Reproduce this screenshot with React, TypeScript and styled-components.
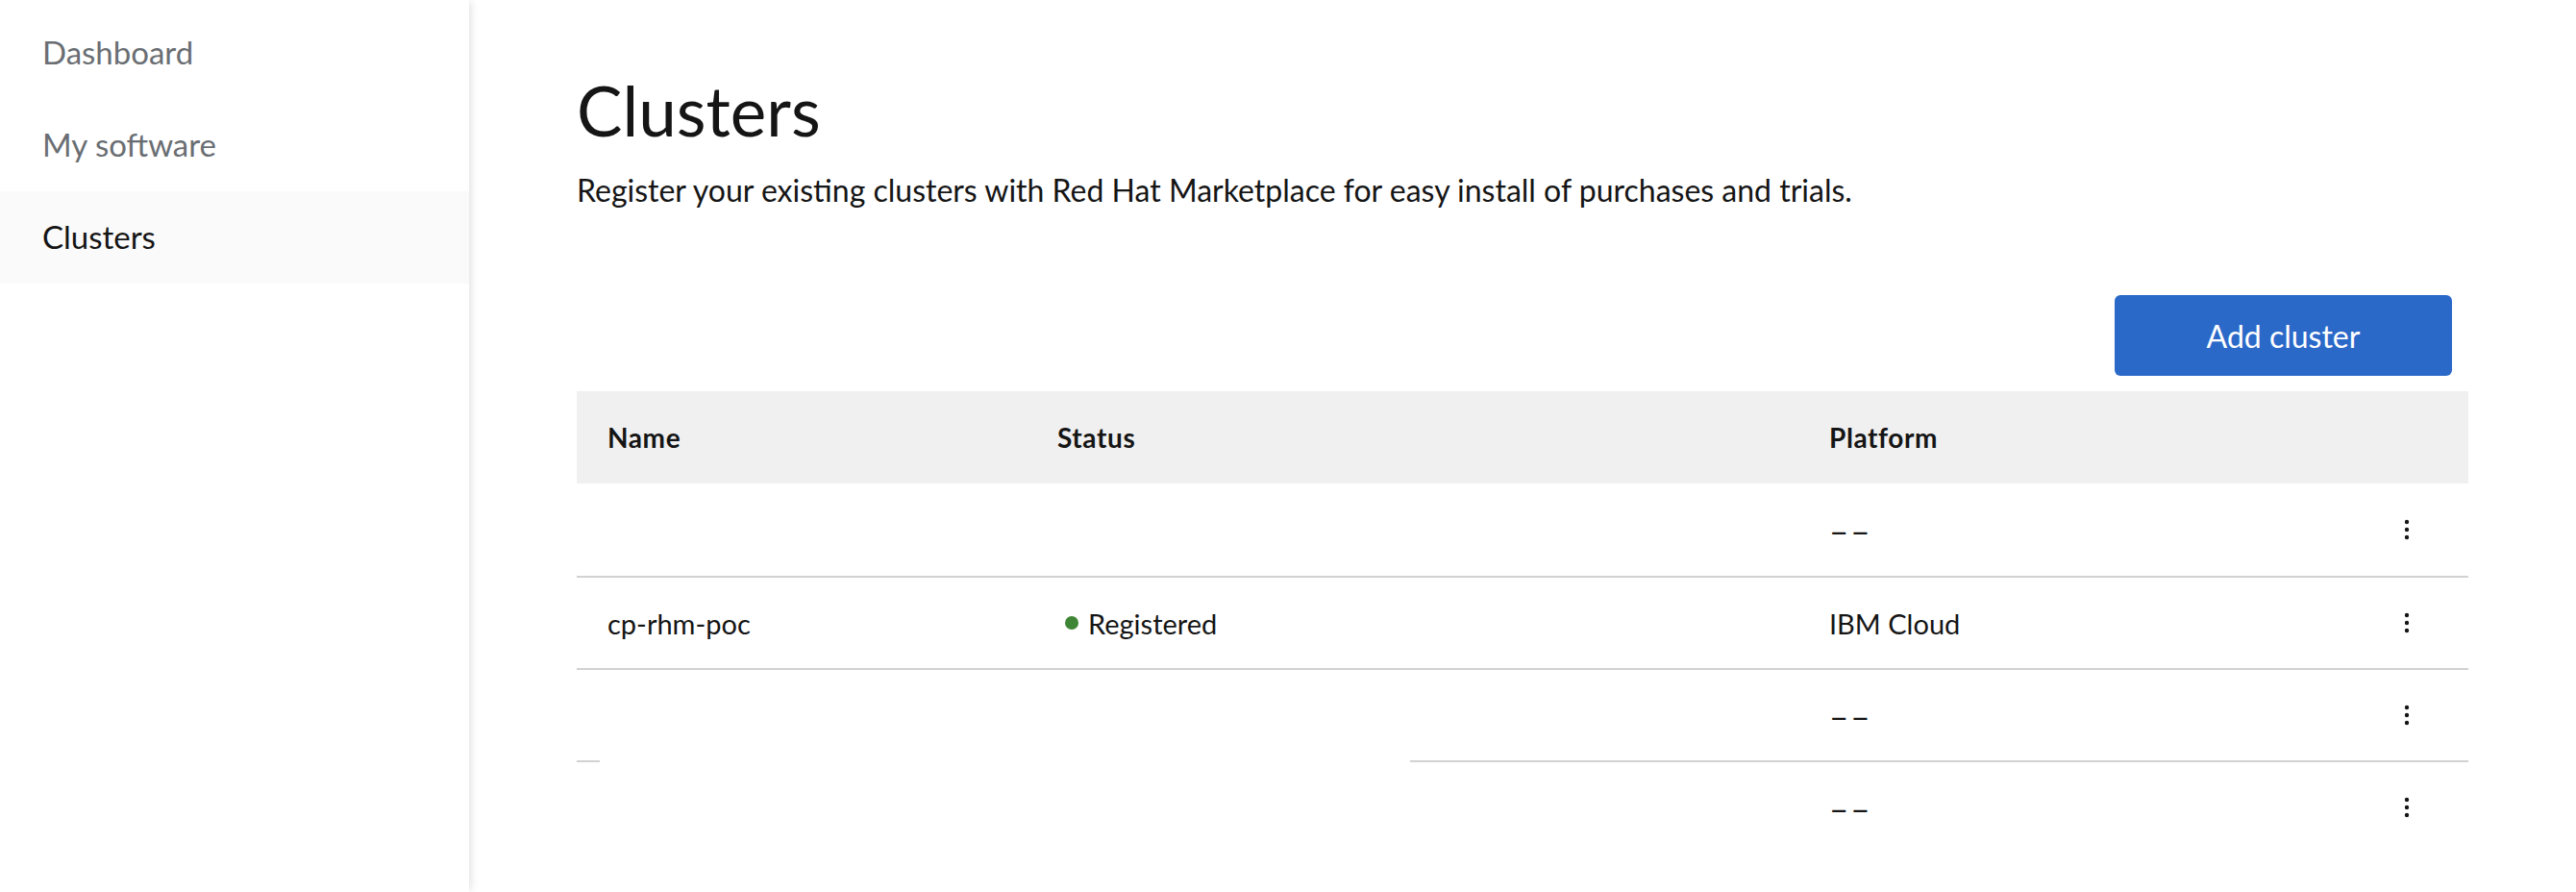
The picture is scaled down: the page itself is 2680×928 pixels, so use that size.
import React from "react";
import styled, { createGlobalStyle } from "styled-components";

const GlobalStyle = createGlobalStyle`
  html, body {
    margin: 0;
    padding: 0;
    background: #ffffff;
  }
  body {
    font-family: "Lato", "Noto Sans", sans-serif;
    color: #151515;
  }
  * { box-sizing: border-box; }
`;

const Page = styled.div`
  display: flex;
  min-height: 928px;
  background: #ffffff;
`;

const Sidebar = styled.nav`
  width: 488px;
  flex: 0 0 488px;
  padding-top: 7px;
  background: #ffffff;
  box-shadow: 4px 0 8px -2px rgba(3, 3, 3, 0.12);
  position: relative;
  z-index: 1;
`;

const NavItem = styled.a<{ $active?: boolean }>`
  display: flex;
  align-items: center;
  height: 96px;
  padding-left: 44px;
  padding-bottom: 2px;
  font-size: 33px;
  color: ${(p) => (p.$active ? "#151515" : "#6a6e73")};
  background: ${(p) => (p.$active ? "#fafafa" : "transparent")};
  text-decoration: none;
  cursor: pointer;
`;

const Main = styled.main`
  flex: 1;
  padding: 73px 112px 0 112px;
`;

const Title = styled.h1`
  margin: 0;
  font-size: 71px;
  line-height: 84px;
  font-weight: 400;
  color: #151515;
`;

const Subtitle = styled.p`
  margin: 22px 0 0 0;
  font-size: 32px;
  line-height: 38px;
  color: #151515;
`;

const Toolbar = styled.div`
  display: flex;
  justify-content: flex-end;
  padding-right: 17px;
  margin-top: 90px;
  margin-bottom: 16px;
`;

const PrimaryButton = styled.button`
  width: 351px;
  height: 84px;
  border: none;
  border-radius: 6px;
  background: #2b69c9;
  color: #ffffff;
  font-family: inherit;
  font-size: 32px;
  cursor: pointer;
`;

const Table = styled.div`
  display: flex;
  flex-direction: column;
`;

const columns = "468px 803px 1fr 128px";

const HeaderRow = styled.div`
  display: grid;
  grid-template-columns: ${columns};
  height: 96px;
  background: #f0f0f0;
  align-items: center;
`;

const HeaderCell = styled.div`
  padding-left: 32px;
  font-size: 28px;
  letter-spacing: 0.6px;
  font-weight: 700;
  color: #151515;
`;

const Row = styled.div<{ $divider?: "none" | "full" | "broken" }>`
  display: grid;
  grid-template-columns: ${columns};
  height: 96px;
  align-items: center;
  border-top: ${(p) => (p.$divider === "full" ? "2px solid #d2d2d2" : "none")};
  padding-top: ${(p) => (p.$divider === "broken" ? "2px" : "0")};
  background: ${(p) =>
    p.$divider === "broken"
      ? "linear-gradient(to right, #d2d2d2 24px, transparent 24px, transparent 867px, #d2d2d2 867px) top / 100% 2px no-repeat"
      : "transparent"};
`;

const Cell = styled.div`
  padding-left: 32px;
  font-size: 29px;
  color: #151515;
  display: flex;
  align-items: center;
`;

const StatusDot = styled.span`
  width: 14px;
  height: 14px;
  border-radius: 50%;
  background: #3e8635;
  margin-left: 8px;
  margin-right: 10px;
  flex: 0 0 14px;
`;

const Dash = styled.span`
  font-size: 35px;
  letter-spacing: 2px;
`;

const KebabCell = styled.div`
  display: flex;
  justify-content: center;
  align-items: center;
`;

const KebabButton = styled.button`
  background: transparent;
  border: none;
  padding: 0;
  display: flex;
  cursor: pointer;
`;

const Kebab = () => (
  <KebabButton aria-label="Actions">
    <svg width="6" height="22" viewBox="0 0 6 22">
      <circle cx="3" cy="3" r="2.2" fill="#151515" />
      <circle cx="3" cy="11" r="2.2" fill="#151515" />
      <circle cx="3" cy="19" r="2.2" fill="#151515" />
    </svg>
  </KebabButton>
);

type ClusterRow = {
  name: string;
  status?: string;
  platform: string;
  divider: "none" | "full" | "broken";
};

const rows: ClusterRow[] = [
  { name: "", platform: "––", divider: "none" },
  { name: "cp-rhm-poc", status: "Registered", platform: "IBM Cloud", divider: "full" },
  { name: "", platform: "––", divider: "full" },
  { name: "", platform: "––", divider: "broken" },
];

export default function App() {
  return (
    <>
      <GlobalStyle />
      <Page>
        <Sidebar>
          <NavItem>Dashboard</NavItem>
          <NavItem>My software</NavItem>
          <NavItem $active>Clusters</NavItem>
        </Sidebar>
        <Main>
          <Title>Clusters</Title>
          <Subtitle>
            Register your existing clusters with Red Hat Marketplace for easy install of purchases and trials.
          </Subtitle>
          <Toolbar>
            <PrimaryButton>Add cluster</PrimaryButton>
          </Toolbar>
          <Table>
            <HeaderRow>
              <HeaderCell>Name</HeaderCell>
              <HeaderCell>Status</HeaderCell>
              <HeaderCell>Platform</HeaderCell>
              <HeaderCell />
            </HeaderRow>
            {rows.map((r, i) => (
              <Row key={i} $divider={r.divider}>
                <Cell>{r.name}</Cell>
                <Cell>
                  {r.status && (
                    <>
                      <StatusDot />
                      {r.status}
                    </>
                  )}
                </Cell>
                <Cell>
                  {r.platform.startsWith("–") ? <Dash>{r.platform}</Dash> : r.platform}
                </Cell>
                <KebabCell>
                  <Kebab />
                </KebabCell>
              </Row>
            ))}
          </Table>
        </Main>
      </Page>
    </>
  );
}
